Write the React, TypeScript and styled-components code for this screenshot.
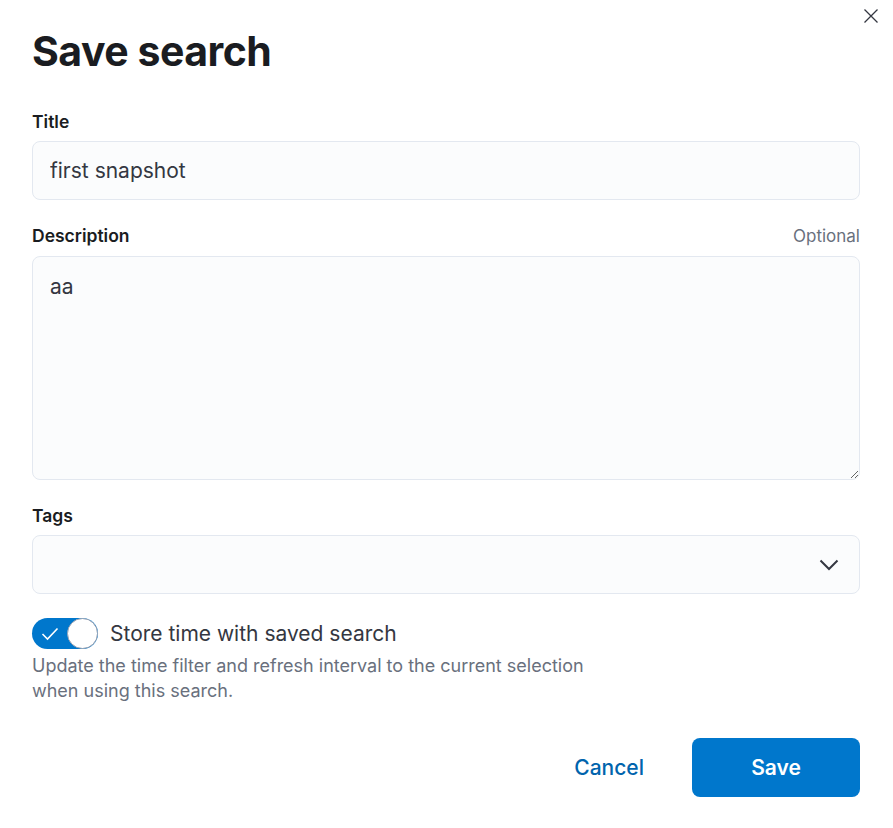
import styled, { createGlobalStyle } from "styled-components";
import { useState } from "react";

const GlobalStyle = createGlobalStyle`
  html, body {
    margin: 0;
    padding: 0;
    background: #ffffff;
    font-family: Inter, "Noto Sans", sans-serif;
    color: #1a1c21;
  }
  * { box-sizing: border-box; }
`;

const Modal = styled.div`
  position: relative;
  width: 893px;
  min-height: 828px;
  padding: 24px 33px 30px 32px;
  background: #fff;
`;

const CloseButton = styled.button`
  position: absolute;
  top: 4px;
  right: 10px;
  width: 24px;
  height: 24px;
  border: none;
  background: transparent;
  padding: 0;
  display: flex;
  align-items: center;
  justify-content: center;
  color: #343741;
  cursor: pointer;
`;

const Heading = styled.h1`
  margin: 0 0 32px;
  font-size: 41px;
  line-height: 54px;
  font-weight: 700;
  letter-spacing: -0.5px;
  color: #1a1c21;
`;

const Field = styled.div`
  display: flex;
  flex-direction: column;
  margin-bottom: 24px;
`;

const LabelRow = styled.div`
  display: flex;
  justify-content: space-between;
  align-items: baseline;
  margin-bottom: 8px;
`;

const Label = styled.label`
  font-size: 17.5px;
  line-height: 23px;
  font-weight: 600;
  color: #1a1c21;
`;

const Optional = styled.span`
  font-size: 17px;
  line-height: 23px;
  color: #69707d;
`;

const TextInput = styled.input`
  height: 59px;
  width: 100%;
  padding: 0 17px;
  font-family: inherit;
  font-size: 21px;
  color: #343741;
  background: #fbfcfd;
  border: 1px solid #e3e8f0;
  border-radius: 8px;
  outline: none;
`;

const TextArea = styled.textarea`
  height: 224px;
  width: 100%;
  padding: 16px 17px;
  font-family: inherit;
  font-size: 21px;
  line-height: 28px;
  color: #343741;
  background: #fbfcfd;
  border: 1px solid #e3e8f0;
  border-radius: 8px;
  outline: none;
  resize: vertical;
`;

const Select = styled.div`
  height: 59px;
  width: 100%;
  padding: 0 20px;
  display: flex;
  align-items: center;
  justify-content: flex-end;
  background: #fbfcfd;
  border: 1px solid #e3e8f0;
  border-radius: 8px;
  color: #343741;
`;

const SwitchRow = styled.label`
  display: flex;
  align-items: center;
  gap: 12px;
  cursor: pointer;
`;

const Track = styled.span<{ $on: boolean }>`
  position: relative;
  width: 66px;
  height: 31px;
  border-radius: 16px;
  background: ${(p) => (p.$on ? "#0077cc" : "#d3dae6")};
  display: inline-block;
  flex-shrink: 0;
`;

const Thumb = styled.span<{ $on: boolean }>`
  position: absolute;
  top: 0;
  left: ${(p) => (p.$on ? "35px" : "0")};
  width: 31px;
  height: 31px;
  border-radius: 50%;
  background: #fff;
  border: 1px solid #98a2b3;
`;

const Check = styled.svg`
  position: absolute;
  left: 9px;
  top: 9px;
`;

const SwitchLabel = styled.span`
  font-size: 21px;
  color: #343741;
`;

const Help = styled.p`
  margin: 4px 0 0;
  width: 600px;
  font-size: 18px;
  line-height: 25px;
  color: #69707d;
`;

const Footer = styled.div`
  display: flex;
  justify-content: flex-end;
  align-items: center;
  gap: 24px;
  margin-top: 35px;
`;

const EmptyButton = styled.button`
  height: 59px;
  padding: 0 24px;
  border: none;
  background: transparent;
  font-family: inherit;
  font-size: 21px;
  font-weight: 500;
  color: #0064ad;
  cursor: pointer;
`;

const PrimaryButton = styled.button`
  height: 59px;
  width: 168px;
  border: none;
  border-radius: 8px;
  background: #0077cc;
  font-family: inherit;
  font-size: 21px;
  font-weight: 600;
  color: #fff;
  cursor: pointer;
`;

export default function App() {
  const [title, setTitle] = useState("first snapshot");
  const [desc, setDesc] = useState("aa");
  const [storeTime, setStoreTime] = useState(true);

  return (
    <>
      <GlobalStyle />
      <Modal>
        <CloseButton aria-label="Close">
          <svg width="16" height="16" viewBox="0 0 16 16">
            <path d="M1.5 1.5l13 13M14.5 1.5l-13 13" stroke="currentColor" strokeWidth="1.3" />
          </svg>
        </CloseButton>
        <Heading>Save search</Heading>

        <Field>
          <LabelRow>
            <Label>Title</Label>
          </LabelRow>
          <TextInput value={title} onChange={(e) => setTitle(e.target.value)} />
        </Field>

        <Field>
          <LabelRow>
            <Label>Description</Label>
            <Optional>Optional</Optional>
          </LabelRow>
          <TextArea value={desc} onChange={(e) => setDesc(e.target.value)} />
        </Field>

        <Field>
          <LabelRow>
            <Label>Tags</Label>
          </LabelRow>
          <Select>
            <svg width="20" height="12" viewBox="0 0 20 12">
              <path d="M1.5 1.5l8.5 8.5 8.5-8.5" fill="none" stroke="currentColor" strokeWidth="2" />
            </svg>
          </Select>
        </Field>

        <SwitchRow onClick={() => setStoreTime(!storeTime)}>
          <Track $on={storeTime}>
            {storeTime && (
              <Check width="18" height="14" viewBox="0 0 18 14">
                <path d="M1.5 7l5 5L16.5 1.5" fill="none" stroke="#fff" strokeWidth="1.6" />
              </Check>
            )}
            <Thumb $on={storeTime} />
          </Track>
          <SwitchLabel>Store time with saved search</SwitchLabel>
        </SwitchRow>
        <Help>
          Update the time filter and refresh interval to the current selection when using this search.
        </Help>

        <Footer>
          <EmptyButton>Cancel</EmptyButton>
          <PrimaryButton>Save</PrimaryButton>
        </Footer>
      </Modal>
    </>
  );
}
